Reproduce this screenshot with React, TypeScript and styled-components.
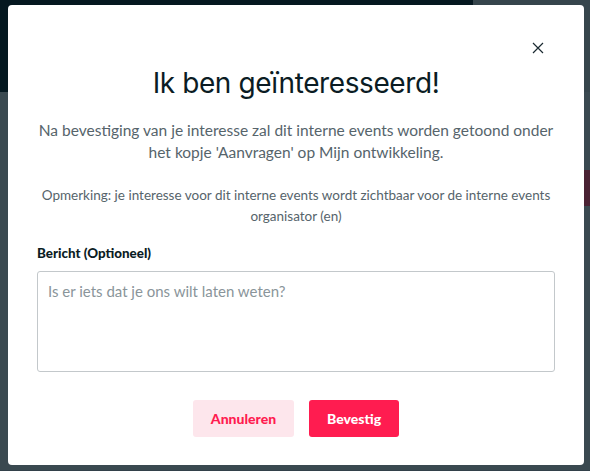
import React from "react";
import styled, { createGlobalStyle } from "styled-components";

const GlobalStyle = createGlobalStyle`
  html, body {
    margin: 0;
    padding: 0;
    height: 100%;
  }
  body {
    font-family: "Lato", "Open Sans", sans-serif;
    overflow: hidden;
  }
  #root {
    height: 100%;
  }
`;

export default function App() {
  return (
    <>
      <GlobalStyle />
      <Page>
        <Header>
          <HeaderMain />
          <HeaderSide />
        </Header>
        <Body>
          <BehindBadge />
        </Body>
      </Page>
      <Overlay>
        <Modal>
          <CloseButton aria-label="Sluiten">
            <svg width="12" height="12" viewBox="0 0 12 12">
              <path d="M1 1L11 11M11 1L1 11" stroke="#1b2a31" strokeWidth="1.2" />
            </svg>
          </CloseButton>
          <Title>Ik ben geïnteresseerd!</Title>
          <Intro>
            Na bevestiging van je interesse zal dit interne events worden getoond onder
            het kopje 'Aanvragen' op Mijn ontwikkeling.
          </Intro>
          <Note>
            Opmerking: je interesse voor dit interne events wordt zichtbaar voor de interne events
            organisator (en)
          </Note>
          <Label htmlFor="bericht">Bericht (Optioneel)</Label>
          <Message id="bericht" placeholder="Is er iets dat je ons wilt laten weten?" />
          <Actions>
            <Action $variant="secondary">Annuleren</Action>
            <Action $variant="primary">Bevestig</Action>
          </Actions>
        </Modal>
      </Overlay>
    </>
  );
}

const Page = styled.div`
  display: flex;
  flex-direction: column;
  height: 100%;
  background: #3a4950;
`;
const Header = styled.div`
  display: flex;
  height: 92px;
`;
const HeaderMain = styled.div`
  flex: 0 0 473px;
  background: #051820;
`;
const HeaderSide = styled.div`
  flex: 1;
  background: #36454c;
`;
const Body = styled.div`
  flex: 1;
  display: flex;
  justify-content: flex-end;
  padding-top: 78px;
  border-bottom: 1px solid #33414a;
`;
const BehindBadge = styled.div`
  width: 40px;
  height: 36px;
  background: #4a2233;
`;

const Overlay = styled.div`
  position: fixed;
  inset: 0;
  display: flex;
  padding: 5px 6px 6px 8px;
`;
const Modal = styled.div`
  position: relative;
  flex: 1;
  height: 460px;
  background: #ffffff;
  border-radius: 4px;
  padding: 0 29px;
  box-sizing: border-box;
  display: flex;
  flex-direction: column;
`;
const CloseButton = styled.button`
  position: absolute;
  top: 32px;
  right: 35px;
  width: 22px;
  height: 22px;
  border: none;
  background: none;
  padding: 0;
  display: flex;
  align-items: center;
  justify-content: center;
  cursor: pointer;
`;
const Title = styled.h1`
  margin: 60px 0 0;
  text-align: center;
  font-family: "Inter", sans-serif;
  font-weight: 400;
  font-size: 28px;
  line-height: 36px;
  color: #0b1c24;
  letter-spacing: -0.4px;
`;
const Intro = styled.p`
  margin: 18px 0 0;
  text-align: center;
  font-size: 15.5px;
  line-height: 22px;
  color: #56646b;
`;
const Note = styled.p`
  margin: 22px 0 0;
  text-align: center;
  font-size: 13.5px;
  line-height: 21px;
  color: #56646b;
`;
const Label = styled.label`
  margin-top: 17px;
  font-size: 13.4px;
  font-weight: 900;
  line-height: 18px;
  color: #0b1c24;
`;
const Message = styled.textarea`
  margin-top: 9px;
  height: 101px;
  box-sizing: border-box;
  border: 1px solid #c3c8cb;
  border-radius: 3px;
  padding: 10px 10px;
  resize: none;
  font-family: "Lato", sans-serif;
  font-size: 15px;
  color: #0b1c24;
  &::placeholder {
    color: #8a959a;
  }
`;
const Actions = styled.div`
  display: flex;
  justify-content: center;
  gap: 15px;
  margin-top: 28px;
`;
const Action = styled.button<{ $variant: "primary" | "secondary" }>`
  height: 37px;
  padding: 0 18px;
  border: none;
  border-radius: 3px;
  font-family: "Lato", sans-serif;
  font-weight: 900;
  font-size: 14px;
  cursor: pointer;
  background: ${(p) => (p.$variant === "primary" ? "#ff1c50" : "#fde6ec")};
  color: ${(p) => (p.$variant === "primary" ? "#ffffff" : "#ff1c50")};
`;
